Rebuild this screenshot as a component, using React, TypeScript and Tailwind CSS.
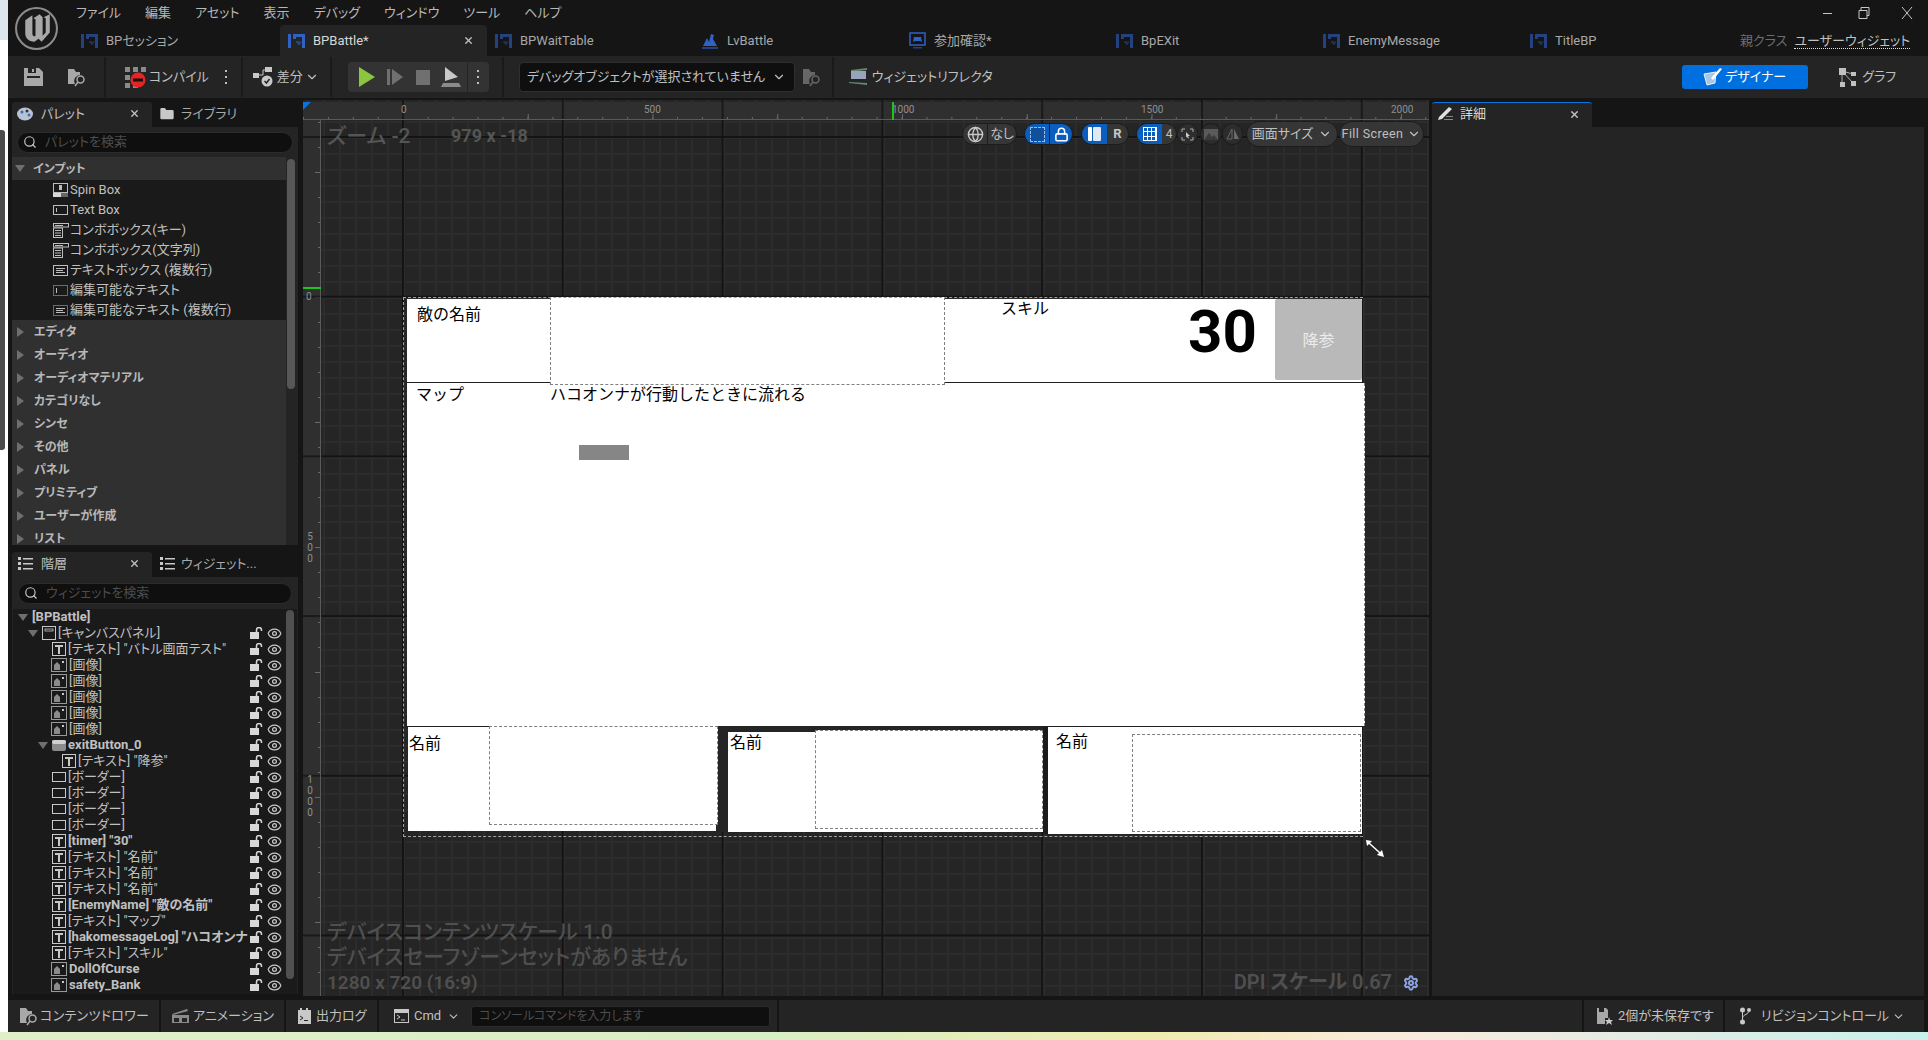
import React from 'react';
import { ChevronDown, Search, X, Folder, Lock, Eye, Globe, Settings } from 'lucide-react';

const menus = ['ファイル', '編集', 'アセット', '表示', 'デバッグ', 'ウィンドウ', 'ツール', 'ヘルプ'];

const tabs = [
  { name: 'BPセッション', kind: 'bp' },
  { name: 'BPBattle*', kind: 'bp', active: true },
  { name: 'BPWaitTable', kind: 'bp' },
  { name: 'LvBattle', kind: 'level' },
  { name: '参加確認*', kind: 'game' },
  { name: 'BpEXit', kind: 'bp' },
  { name: 'EnemyMessage', kind: 'bp' },
  { name: 'TitleBP', kind: 'bp' },
];

const paletteItems = [
  { name: 'Spin Box', icon: 'spin' },
  { name: 'Text Box', icon: 'text' },
  { name: 'コンボボックス(キー)', icon: 'combo' },
  { name: 'コンボボックス(文字列)', icon: 'combo' },
  { name: 'テキストボックス (複数行)', icon: 'multi' },
  { name: '編集可能なテキスト', icon: 'edit' },
  { name: '編集可能なテキスト (複数行)', icon: 'editmulti' },
];

const categories = ['エディタ', 'オーディオ', 'オーディオマテリアル', 'カテゴリなし', 'シンセ', 'その他', 'パネル', 'プリミティブ', 'ユーザーが作成', 'リスト'];

type TreeRow = { label: string; icon?: string; left: number; bold?: boolean; toggle?: number };

const tree: TreeRow[] = [
  { label: '[キャンバスパネル]', icon: 'canvas', left: 33, toggle: 19 },
  { label: '[テキスト] "バトル画面テスト"', icon: 't', left: 43 },
  { label: '[画像]', icon: 'img', left: 42 },
  { label: '[画像]', icon: 'img', left: 42 },
  { label: '[画像]', icon: 'img', left: 42 },
  { label: '[画像]', icon: 'img', left: 42 },
  { label: '[画像]', icon: 'img', left: 42 },
  { label: 'exitButton_0', icon: 'btn', left: 43, bold: true, toggle: 29 },
  { label: '[テキスト] "降参"', icon: 't', left: 53 },
  { label: '[ボーダー]', icon: 'border', left: 43 },
  { label: '[ボーダー]', icon: 'border', left: 43 },
  { label: '[ボーダー]', icon: 'border', left: 43 },
  { label: '[ボーダー]', icon: 'border', left: 43 },
  { label: '[timer] "30"', icon: 't', left: 43, bold: true },
  { label: '[テキスト] "名前"', icon: 't', left: 43 },
  { label: '[テキスト] "名前"', icon: 't', left: 43 },
  { label: '[テキスト] "名前"', icon: 't', left: 43 },
  { label: '[EnemyName] "敵の名前"', icon: 't', left: 43, bold: true },
  { label: '[テキスト] "マップ"', icon: 't', left: 43 },
  { label: '[hakomessageLog] "ハコオンナ', icon: 't', left: 43, bold: true },
  { label: '[テキスト] "スキル"', icon: 't', left: 43 },
  { label: 'DollOfCurse', icon: 'img', left: 42, bold: true },
  { label: 'safety_Bank', icon: 'img', left: 42, bold: true },
];

function BpIcon({ dim }: { dim?: boolean }) {
  const c = dim ? '#24427f' : '#2f62c4';
  return (
    <svg width="17" height="16" viewBox="0 0 17 16" className="shrink-0">
      <rect x="0" y="1" width="3" height="14" fill={c} />
      <rect x="5" y="1" width="12" height="3" fill={c} />
      <rect x="5" y="4" width="3" height="2" fill={c} />
      <rect x="14" y="4" width="3" height="11" fill={c} />
      <path d="M8 8 l2.5 0 l1 1 l1 -1 l1 1 l-2 3 l-1 0 l-2.500 -3z" fill={c} opacity="0.6" />
    </svg>
  );
}

function TabIcon({ kind, active }: { kind: string; active?: boolean }) {
  if (kind === 'level') {
    return (
      <svg width="17" height="18" viewBox="0 0 17 18" className="shrink-0">
        <path d="M1 14 L5 6 L7 10 L9 2 L12 3 L11 7 L15 14z" fill="#2f62c4" />
        <rect x="0" y="15" width="16" height="2" fill="#24427f" />
      </svg>
    );
  }
  if (kind === 'game') {
    return (
      <svg width="17" height="18" viewBox="0 0 17 18" fill="none" className="shrink-0">
        <rect x="1" y="1" width="15" height="12" stroke="#2f62c4" strokeWidth="1.5" />
        <path d="M4 10 L5 5 H12 L13 10 L11 9 H6z" fill="#2f62c4" />
        <rect x="4" y="15" width="9" height="1.500" fill="#24427f" />
      </svg>
    );
  }
  return <BpIcon dim={!active} />;
}

function UnrealLogo() {
  return (
    <svg width="45" height="45" viewBox="0 0 44 44" className="shrink-0">
      <circle cx="22" cy="22" r="20" fill="#191919" stroke="#8c8c8c" strokeWidth="2" />
      <path
        d="M11 14 L18 9 V27 C18 30 20 30 21 29 V13 L19 12 L25 8 L28 11 V29 L31 26 V12 L29 11 L35 8 V26 L27 35 L24 32 L20 35 C14 35 11 31 11 27z"
        fill="#a8a8a8"
      />
    </svg>
  );
}

function Kebab() {
  return (
    <svg width="4" height="16" viewBox="0 0 4 16" fill="#bdbdbd" className="shrink-0">
      <rect x="1" y="1" width="2" height="2" />
      <rect x="1" y="7" width="2" height="2" />
      <rect x="1" y="13" width="2" height="2" />
    </svg>
  );
}

function Divider() {
  return <div className="w-[2px] h-[40px] bg-[#1a1a1a] shrink-0" />;
}

function BrowseIcon({ color = '#a8a8a8' }: { color?: string }) {
  return (
    <svg width="20" height="20" viewBox="0 0 20 20" fill="none" className="shrink-0">
      <path d="M1 2 H7 L9 5 H13 V8 A6 6 0 0 0 8 17 H1z" fill={color} />
      <circle cx="13.500" cy="12.500" r="3.500" stroke={color} strokeWidth="1.500" />
      <path d="M11 15 L8 19" stroke={color} strokeWidth="1.500" />
    </svg>
  );
}

function ListIcon() {
  return (
    <svg width="15" height="13" viewBox="0 0 15 13" className="shrink-0" fill="#c8c8c8">
      <rect x="0" y="0" width="3" height="3" />
      <rect x="5" y="1" width="10" height="1.500" />
      <rect x="0" y="5" width="3" height="3" />
      <rect x="5" y="6" width="10" height="1.500" />
      <rect x="0" y="10" width="3" height="3" />
      <rect x="5" y="11" width="10" height="1.500" />
    </svg>
  );
}

function OpenLock() {
  return (
    <svg width="13" height="12" viewBox="0 0 13 12" fill="none" className="shrink-0 ml-[1px]">
      <rect x="0" y="5" width="9" height="7" fill="#d8d8d8" />
      <path d="M6.500 5 V3 A2.500 2.500 0 0 1 11.500 3 V4" stroke="#d8d8d8" strokeWidth="1.500" />
    </svg>
  );
}

function SmallWidgetIcon({ kind }: { kind: string }) {
  const s = '#bdbdbd';
  if (kind === 'spin') {
    return (
      <svg width="15" height="15" viewBox="0 0 15 15" fill="none">
        <rect x="0.500" y="0.500" width="14" height="9" stroke={s} />
        <rect x="0" y="10" width="8" height="4" fill="#d8d8d8" />
        <rect x="8" y="10" width="7" height="4" fill="#666" />
        <rect x="6" y="2" width="3" height="5" fill={s} />
      </svg>
    );
  }
  if (kind === 'text') {
    return (
      <svg width="15" height="10" viewBox="0 0 15 10" fill="none">
        <rect x="0.500" y="0.500" width="14" height="9" stroke={s} />
        <rect x="3" y="3" width="1" height="4" fill={s} />
      </svg>
    );
  }
  if (kind === 'combo') {
    return (
      <svg width="16" height="15" viewBox="0 0 16 15" fill="none">
        <rect x="0.500" y="0.500" width="15" height="3.500" stroke={s} />
        <rect x="2" y="2" width="8" height="1" fill={s} />
        <rect x="0.500" y="5" width="9" height="9.500" stroke={s} />
        <rect x="2" y="7" width="6" height="1" fill={s} />
        <rect x="2" y="9.500" width="6" height="1" fill={s} />
        <rect x="2" y="12" width="6" height="1" fill={s} />
      </svg>
    );
  }
  if (kind === 'multi') {
    return (
      <svg width="15" height="11" viewBox="0 0 15 11" fill="none">
        <rect x="0.500" y="0.500" width="14" height="10" stroke={s} />
        <rect x="3" y="3" width="9" height="1" fill={s} />
        <rect x="3" y="5" width="7" height="1" fill={s} />
        <rect x="3" y="7" width="9" height="1" fill={s} />
      </svg>
    );
  }
  return (
    <svg width="15" height="11" viewBox="0 0 15 11" fill="none">
      <rect x="0.500" y="0.500" width="14" height="10" stroke={s} strokeDasharray="1 1" />
      {kind === 'edit' ? (
        <rect x="3" y="3" width="1" height="5" fill={s} />
      ) : (
        <>
          <rect x="3" y="3" width="9" height="1" fill={s} />
          <rect x="3" y="5" width="7" height="1" fill={s} />
          <rect x="3" y="7" width="9" height="1" fill={s} />
        </>
      )}
    </svg>
  );
}

function TreeIcon({ kind }: { kind?: string }) {
  const s = '#c8c8c8';
  if (kind === 't') {
    return (
      <div className="w-[14px] h-[14px] border border-[#c8c8c8] flex items-center justify-center shrink-0">
        <svg width="8" height="9" viewBox="0 0 8 9"><path d="M0 0 H8 V2 H5 V9 H3 V2 H0z" fill={s} /></svg>
      </div>
    );
  }
  if (kind === 'img') {
    return (
      <svg width="16" height="14" viewBox="0 0 16 14" fill="none" className="shrink-0">
        <rect x="0.500" y="0.500" width="15" height="13" stroke="#999" />
        <path d="M3 12 V7 L6 4 L9 7 V12z" fill="#8a8a8a" />
        <rect x="11" y="3" width="2" height="2" fill={s} />
      </svg>
    );
  }
  if (kind === 'border') {
    return <div className="w-[14px] h-[10px] border border-[#c8c8c8] shrink-0" />;
  }
  if (kind === 'canvas') {
    return (
      <svg width="14" height="14" viewBox="0 0 14 14" fill="none" className="shrink-0">
        <rect x="0.500" y="0.500" width="13" height="13" stroke={s} />
        <rect x="3" y="3" width="8" height="2" stroke={s} strokeWidth="0.800" />
      </svg>
    );
  }
  return (
    <svg width="14" height="11" viewBox="0 0 14 11" className="shrink-0">
      <rect x="0" y="0" width="14" height="11" rx="2" fill="#8c8c8c" />
      <rect x="0" y="0" width="14" height="4" rx="2" fill="#d0d0d0" />
    </svg>
  );
}

function PanelTabs({ first, second, firstIcon, secondIcon }: { first: string; second: string; firstIcon: React.ReactNode; secondIcon: React.ReactNode }) {
  return (
    <div className="flex h-[25px] shrink-0">
      <div className="w-[140px] bg-[#242424] rounded-t-[3px] flex items-center pl-[5px] pr-[12px] pb-[2px] text-[13px] text-[#c0c0c0]">
        <span className="w-[16px] flex justify-center">{firstIcon}</span>
        <span className="ml-[8px] flex-1">{first}</span>
        <X size={11} strokeWidth={3} className="text-[#c0c0c0]" />
      </div>
      <div className="flex items-center pl-[7px] pb-[2px] text-[13px] text-[#a8a8a8]">
        <span className="w-[16px] flex justify-center">{secondIcon}</span>
        <span className="ml-[6px]">{second}</span>
      </div>
    </div>
  );
}

function SearchBox({ text }: { text: string }) {
  return (
    <div className="h-[21px] bg-[#0f0f0f] border border-[#2c2c2c] rounded-full flex items-center pl-[5px] pb-[1px] gap-[8px] text-[13px] text-[#4d4d4d]">
      <Search size={14} strokeWidth={2} className="text-[#c8c8c8]" />
      <span>{text}</span>
    </div>
  );
}

function Arrow({ open }: { open?: boolean }) {
  return open ? (
    <svg width="10" height="7" viewBox="0 0 10 7" className="shrink-0"><path d="M0 0 H10 L5 7z" fill="#6f6f6f" /></svg>
  ) : (
    <svg width="7" height="10" viewBox="0 0 7 10" className="shrink-0"><path d="M0 0 V10 L7 5z" fill="#6f6f6f" /></svg>
  );
}

function Palette() {
  return (
    <div className="h-[443px] flex flex-col">
      <PanelTabs
        first="パレット"
        second="ライブラリ"
        firstIcon={<svg width="16" height="14" viewBox="0 0 16 14"><ellipse cx="8" cy="7" rx="8" ry="6.500" fill="#b8c4d4" /><circle cx="5" cy="5" r="1.500" fill="#3c6cc0" /><circle cx="10" cy="4" r="1.500" fill="#333" /><circle cx="12" cy="8" r="1.500" fill="#3c6cc0" /></svg>}
        secondIcon={<Folder size={16} fill="#c8c8c8" strokeWidth={0} />}
      />
      <div className="flex-1 bg-[#242424] pt-[5px] min-h-0 flex flex-col overflow-hidden">
        <div className="px-[5px]"><SearchBox text="パレットを検索" /></div>
        <div className="flex-1 mt-[4px] flex min-h-0">
          <div className="w-[274px] bg-[#1a1a1a] overflow-hidden">
            <div className="h-[23px] bg-[#303030] flex items-center pl-[3px] gap-[7px] text-[12px] font-bold text-[#b8b8b8]">
              <Arrow open />
              <span className="ml-[1px]">インプット</span>
            </div>
            {paletteItems.map((item) => (
              <div key={item.name} className="h-[20px] flex items-center text-[13px] text-[#c0c0c0]">
                <div className="ml-[41px] w-[17px] flex items-center shrink-0"><SmallWidgetIcon kind={item.icon} /></div>
                <span className="ml-[0px] whitespace-nowrap">{item.name}</span>
              </div>
            ))}
            {categories.map((c) => (
              <div key={c} className="h-[23px] bg-[#303030] flex items-center pl-[5px] gap-[9px] text-[12px] font-bold text-[#b8b8b8]">
                <Arrow />
                <span className="ml-[1px]">{c}</span>
              </div>
            ))}
          </div>
          <div className="w-[12px] pl-[1px] pt-[2px]">
            <div className="w-[8px] h-[230px] rounded-full bg-[#575757]" />
          </div>
        </div>
      </div>
    </div>
  );
}

function Hierarchy() {
  return (
    <div className="h-[442px] mt-[7px] flex flex-col">
      <PanelTabs first="階層" second="ウィジェット..." firstIcon={<ListIcon />} secondIcon={<ListIcon />} />
      <div className="flex-1 bg-[#242424] pt-[6px] min-h-0 flex flex-col overflow-hidden">
        <div className="px-[6px]"><SearchBox text="ウィジェットを検索" /></div>
        <div className="flex-1 mt-[5px] mx-[1px] flex min-h-0 bg-[#1a1a1a]">
          <div className="w-[273px] overflow-hidden">
            <div className="h-[16px] flex items-center pl-[5px] text-[13px] font-bold text-[#c0c0c0]">
              <Arrow open />
              <span className="ml-[4px]">[BPBattle]</span>
            </div>
            {tree.map((row, i) => (
              <div key={i} className="relative h-[16px] flex items-center text-[13px] text-[#c0c0c0]">
                {row.toggle && (
                  <div className="absolute top-[5px]" style={{ left: row.toggle - 4 }}><Arrow open /></div>
                )}
                <div className="flex items-center gap-[2px] w-[236px] shrink-0 whitespace-nowrap" style={{ paddingLeft: row.left - 4 }}>
                  <TreeIcon kind={row.icon} />
                  <span className={row.bold ? 'font-bold' : ''}>{row.label}</span>
                </div>
                <OpenLock />
                <Eye size={15} strokeWidth={2} className="text-[#c8c8c8] ml-[4px]" />
              </div>
            ))}
          </div>
          <div className="w-[12px] pl-[1px] pt-[1px]">
            <div className="w-[8px] h-[369px] rounded-full bg-[#505050]" />
          </div>
        </div>
      </div>
    </div>
  );
}

function ToolPill({ children, className }: { children: React.ReactNode; className?: string }) {
  return <div className={'flex h-[22px] rounded-full overflow-hidden border border-[#1c1c1c] shrink-0 ' + (className ?? '')}>{children}</div>;
}

function ViewportToolbar() {
  return (
    <div className="absolute top-[21px] right-[5px] flex items-center text-[#c0c0c0] text-[13px]">
      <ToolPill className="w-[55px] bg-[#363636]">
        <div className="w-[25px] flex items-center justify-center border-r border-[#1c1c1c]"><Globe size={17} className="text-[#c8c8c8]" /></div>
        <div className="flex-1 flex items-center justify-center">なし</div>
      </ToolPill>
      <ToolPill className="w-[49px] ml-[7px] bg-[#0a5ebd]">
        <div className="w-[25px] flex items-center justify-center border-r border-[#1c1c1c]"><div className="w-[15px] h-[15px] border border-dashed border-[#a0b8d8] bg-[#0f4f9c]" /></div>
        <div className="flex-1 flex items-center justify-center"><Lock size={15} strokeWidth={2.500} className="text-white" /></div>
      </ToolPill>
      <ToolPill className="w-[48px] ml-[8px] bg-[#363636]">
        <div className="w-[25px] bg-[#0a5ebd] flex items-center justify-center gap-[1px]">
          <div className="w-[4px] h-[14px] bg-white rounded-[1px]" />
          <div className="w-[8px] h-[14px] bg-[#dfe8f4] rounded-[1px]" />
        </div>
        <div className="flex-1 flex items-center justify-center font-bold text-[#c8c8c8]">R</div>
      </ToolPill>
      <ToolPill className="w-[41px] ml-[7px] bg-[#363636]">
        <div className="w-[25px] bg-[#0a5ebd] flex items-center justify-center">
          <div className="w-[14px] h-[14px] grid grid-cols-3 gap-[1px] bg-white p-[1px]">
            {Array.from({ length: 9 }).map((_, i) => <div key={i} className="bg-[#0a5ebd]" />)}
          </div>
        </div>
        <div className="flex-1 flex items-center justify-center text-[12px]">4</div>
      </ToolPill>
      <ToolPill className="w-[21px] bg-[#2e2e2e] items-center justify-center">
        <svg width="13" height="13" viewBox="0 0 13 13" fill="none" stroke="#aaa"><path d="M1 4 V1 H4 M9 1 H12 V4 M1 9 V12 H4 M12 9 V12 H9" /><path d="M5 4 L9 8 H7 L8 10 L7 10.500 L6 8.500 L5 9.500z" fill="#ccc" stroke="none" /></svg>
      </ToolPill>
      <ToolPill className="w-[22px] ml-[2px] bg-[#2c2c2c] items-center justify-center">
        <svg width="14" height="11" viewBox="0 0 14 11"><rect x="0" y="0" width="14" height="11" fill="#5a5a5a" /><path d="M0 11 L5 4 L8 8 L10 6 L14 11z" fill="#3a3a3a" /></svg>
      </ToolPill>
      <ToolPill className="w-[21px] bg-[#2c2c2c] items-center justify-center">
        <svg width="14" height="12" viewBox="0 0 14 12" fill="none"><path d="M6 1 V11 H1z" stroke="#6a6a6a" /><path d="M8 1 V11 H13z" fill="#6a6a6a" /></svg>
      </ToolPill>
      <ToolPill className="h-[26px] w-[92px] ml-[3px] bg-[#363636] items-center justify-center gap-[5px]">
        <span>画面サイズ</span>
        <ChevronDown size={14} />
      </ToolPill>
      <ToolPill className="h-[26px] w-[85px] ml-[1px] bg-[#363636] items-center justify-center gap-[4px]">
        <span className="text-[12.500px] tracking-[0.4px]">Fill Screen</span>
        <ChevronDown size={14} />
      </ToolPill>
    </div>
  );
}

function Rulers() {
  return (
    <>
      <div className="absolute left-0 top-[2px] right-0 h-[18px] bg-[#2f2f2f] border-b border-[#5a5a5a]">
        <div className="absolute inset-x-0 bottom-0 h-[2px] bg-[linear-gradient(to_right,#6a6a6a_1px,transparent_1px)] bg-[size:24.950px_2px]" />
        <div className="absolute inset-x-0 bottom-0 h-[5px] bg-[linear-gradient(to_right,#6a6a6a_1px,transparent_1px)] bg-[size:124.750px_5px] bg-[position:100px_0] bg-repeat-x" />
        <div className="absolute inset-0 bg-[linear-gradient(to_right,#1a1a1a_2px,transparent_2px)] bg-[size:159.800px_18px] bg-[position:99px_0]" />
      </div>
      <div className="absolute left-[98px] top-[2px] text-[10px] text-[#909090]">0</div>
      <div className="absolute left-[341px] top-[2px] text-[10px] text-[#909090]">500</div>
      <div className="absolute left-[589px] top-[2px] text-[10px] text-[#909090]">1000</div>
      <div className="absolute left-[838px] top-[2px] text-[10px] text-[#909090]">1500</div>
      <div className="absolute left-[1088px] top-[2px] text-[10px] text-[#909090]">2000</div>
      <div className="absolute left-[589px] top-[2px] w-[2px] h-[18px] bg-[#1fc41f]" />

      <div className="absolute left-0 top-[20px] bottom-0 w-[18px] bg-[#2f2f2f] border-r border-[#5a5a5a]">
        <div className="absolute inset-y-0 right-0 w-[2px] bg-[linear-gradient(to_bottom,#6a6a6a_1px,transparent_1px)] bg-[size:2px_25px] bg-[position:0_2px]" />
        <div className="absolute inset-y-0 right-0 w-[5px] bg-[linear-gradient(to_bottom,#6a6a6a_1px,transparent_1px)] bg-[size:5px_125px] bg-[position:0_52px] bg-repeat-y" />
        <div className="absolute inset-0 bg-[linear-gradient(to_bottom,#1a1a1a_2px,transparent_2px)] bg-[size:18px_159.700px] bg-[position:0_16px]" />
      </div>
      <div className="absolute left-[3px] top-[191px] text-[10px] leading-[11px] text-[#909090]">0</div>
      <div className="absolute left-[3px] top-[431px] w-[8px] text-[10px] leading-[11px] text-[#909090] text-center">5<br />0<br />0</div>
      <div className="absolute left-[3px] top-[674px] w-[8px] text-[10px] leading-[11px] text-[#909090] text-center">1<br />0<br />0<br />0</div>
      <div className="absolute left-0 top-[187px] w-[18px] h-[2px] bg-[#1fc41f]" />
      <div className="absolute left-0 top-[2px] w-0 h-0 border-t-[8px] border-r-[8px] border-t-[#0b73e0] border-r-transparent" />
    </>
  );
}

// widget preview, positions are relative to the dashed canvas outline
function DesignCanvas() {
  const dashed = 'absolute border border-dashed border-[#808080]';
  return (
    <div className="absolute left-[100px] top-[197px] w-[962px] h-[540px] font-['Noto_Sans_CJK_JP',sans-serif] [font-feature-settings:normal] text-[16px] leading-[20px] text-black">
      <div className="absolute left-[4px] top-[2px] w-[955px] h-[84px] bg-white border-b border-[#222]" />
      <div className={dashed + ' left-[147px] top-0 w-[395px] h-[88px] bg-white'} />
      <div className="absolute left-[14px] top-[6px]">敵の名前</div>
      <div className="absolute left-[598px] top-0">スキル</div>
      <div className="absolute left-[785px] top-[5px] text-[60px] leading-[60px] font-bold font-['Roboto',sans-serif]">30</div>
      <div className="absolute left-[872px] top-[2px] w-[87px] h-[81px] pb-[2px] bg-[#b9b9b9] rounded-[2px] flex items-center justify-center text-[#ececec]">降参</div>

      <div className="absolute left-[4px] top-[86px] w-[958px] h-[343px] bg-white border-r border-dashed border-[#808080]" />
      <div className={dashed + ' left-[147px] top-0 w-[395px] h-[88px] border-t-0 bg-white'} />
      <div className="absolute left-[13px] top-[86px]">マップ</div>
      <div className="absolute left-[147px] top-[86px] whitespace-nowrap">ハコオンナが行動したときに流れる</div>
      <div className="absolute left-[176px] top-[148px] w-[50px] h-[15px] bg-[#868686]" />

      <div className="absolute left-[4px] top-[429px] w-[958px] h-px bg-[#222]" />
      <div className="absolute left-[5px] top-[430px] w-[308px] h-[104px] bg-white" />
      <div className={dashed + ' left-[86px] top-[429px] w-[229px] h-[99px] bg-white'} />
      <div className="absolute left-[6px] top-[435px]">名前</div>

      <div className="absolute left-[315px] top-[429px] w-[10px] h-[106px] bg-[#252525]" />
      <div className="absolute left-[325px] top-[429px] w-[315px] h-[6px] bg-[#252525]" />
      <div className="absolute left-[325px] top-[435px] w-[315px] h-[100px] bg-white" />
      <div className={dashed + ' left-[412px] top-[433px] w-[228px] h-[99px] bg-white'} />
      <div className="absolute left-[327px] top-[434px]">名前</div>

      <div className="absolute left-[640px] top-[430px] w-[5px] h-[107px] bg-[#1c1c1c]" />
      <div className="absolute left-[645px] top-[430px] w-[314px] h-[107px] bg-white" />
      <div className={dashed + ' left-[729px] top-[437px] w-[229px] h-[98px] bg-white'} />
      <div className="absolute left-[653px] top-[433px]">名前</div>

      <div className="absolute left-0 top-0 w-[960px] h-[540px] border-t border-l border-b border-dashed border-[#a0a0a0]" />
      <svg width="18" height="17" viewBox="0 0 18 17" className="absolute left-[963px] top-[543px]">
        <path d="M0 0 L6 1 L4 3 L14 12 L16 10 L18 17 L11 15 L13 13 L3 4 L1 6z" fill="#fff" />
      </svg>
    </div>
  );
}

function Viewport() {
  return (
    <div className="relative w-[1126px] h-[896px] mt-[2px] overflow-hidden bg-[#252525] bg-[image:linear-gradient(to_right,#141414_2px,transparent_2px),linear-gradient(to_bottom,#141414_2px,transparent_2px),linear-gradient(to_right,#2c2c2c_2px,transparent_2px),linear-gradient(to_bottom,#2c2c2c_2px,transparent_2px)] bg-[size:159.800px_159.700px,159.800px_159.700px,16px_16px,16px_16px] bg-[position:99px_0,0_36px,4px_0,0_5px]">
      <DesignCanvas />
      <Rulers />
      <ViewportToolbar />
      <div className="absolute left-[24px] top-[22px] text-[21px] leading-[28px] font-medium text-[#555]">ズーム -2</div>
      <div className="absolute left-[148px] top-[22px] text-[18px] leading-[28px] font-bold text-[#555]">979 x -18</div>
      <div className="absolute left-[24px] top-[820px] text-[21px] leading-[25px] font-medium text-[#4f4f4f] whitespace-nowrap">
        <div>デバイスコンテンツスケール 1.0</div>
        <div>デバイスセーフゾーンセットがありません</div>
        <div className="text-[19px] font-semibold">1280 x 720 (16:9)</div>
      </div>
      <div className="absolute right-[37px] top-[870px] text-[20px] leading-[25px] font-semibold text-[#4f4f4f] whitespace-nowrap">DPI スケール 0.67</div>
      <Settings size={16} strokeWidth={3} className="absolute left-[1100px] top-[875px] text-[#8aa4e4]" />
    </div>
  );
}

function Toolbar() {
  return (
    <div className="h-[42px] bg-[#242424] flex items-center shrink-0 text-[13px] text-[#c0c0c0]">
      <div className="w-[16px]" />
      <svg width="19" height="18" viewBox="0 0 19 18" className="shrink-0">
        <path d="M0 0 H15 L19 4 V18 H0z" fill="#a8a8a8" />
        <rect x="4" y="0" width="8" height="5" fill="#242424" />
        <rect x="8" y="1" width="2" height="3" fill="#a8a8a8" />
        <rect x="3" y="8" width="13" height="2" fill="#242424" />
      </svg>
      <div className="w-[24px]" />
      <BrowseIcon />
      <div className="w-[17px]" />
      <Divider />
      <div className="w-[19px]" />
      <svg width="21" height="24" viewBox="0 0 21 24" className="shrink-0">
        <path d="M0 2 H5 V7 H0z M8 2 H13 V7 H8z M16 2 H21 V7 H16z M0 10 H5 V15 H0z M0 18 H5 V23 H0z M8 18 H13 V23 H8z" fill="#8a8a8a" />
        <circle cx="13" cy="15" r="7.500" fill="#e62424" />
        <rect x="8" y="13.500" width="10" height="3" fill="#111" />
      </svg>
      <span className="ml-[3px]">コンパイル</span>
      <div className="w-[15px]" />
      <Kebab />
      <div className="w-[13px]" />
      <Divider />
      <div className="w-[10px]" />
      <svg width="20" height="20" viewBox="0 0 20 20" className="shrink-0">
        <rect x="0" y="6" width="6" height="5" fill="#c8c8c8" />
        <rect x="12" y="0" width="7" height="5" fill="#c8c8c8" />
        <path d="M6 8 H10 V3 H12" stroke="#c8c8c8" fill="none" />
        <circle cx="14" cy="14" r="5.500" fill="#c8c8c8" />
        <path d="M11.500 14 L13.500 16 L16.500 12" stroke="#242424" strokeWidth="1.500" fill="none" />
      </svg>
      <span className="ml-[4px]">差分</span>
      <ChevronDown size={14} className="ml-[2px]" />
      <div className="w-[11px]" />
      <Divider />
      <div className="w-[16px]" />
      <div className="h-[30px] w-[141px] bg-[#333] rounded-[4px] flex items-center shrink-0">
        <svg width="16" height="20" viewBox="0 0 16 20" className="ml-[11px] shrink-0"><path d="M0 0 L16 10 L0 20z" fill="#8cc63f" /></svg>
        <svg width="16" height="16" viewBox="0 0 16 16" className="ml-[12px] shrink-0"><rect x="0" y="0" width="3" height="16" fill="#707070" /><path d="M5 0 L16 8 L5 16z" fill="#707070" /></svg>
        <div className="ml-[13px] w-[14px] h-[15px] bg-[#707070] shrink-0" />
        <svg width="20" height="20" viewBox="0 0 20 20" className="ml-[11px] shrink-0"><path d="M4 0 L17 10 L4 14z" fill="#c8c8c8" /><path d="M2 16 H18 L20 20 H0z" fill="#8a8a8a" /></svg>
        <div className="w-[1px] h-[30px] bg-[#242424] ml-[6px]" />
        <div className="flex-1 flex justify-center"><Kebab /></div>
      </div>
      <div className="w-[13px]" />
      <Divider />
      <div className="w-[15px]" />
      <div className="h-[30px] w-[276px] bg-[#0f0f0f] border border-[#2f2f2f] rounded-[4px] flex items-center pl-[7px] pr-[8px] justify-between shrink-0">
        <span className="whitespace-nowrap">デバッグオブジェクトが選択されていません</span>
        <ChevronDown size={14} />
      </div>
      <div className="w-[7px]" />
      <BrowseIcon color="#666" />
      <div className="w-[10px]" />
      <Divider />
      <div className="w-[15px]" />
      <svg width="20" height="20" viewBox="0 0 20 20" className="shrink-0">
        <path d="M2 3 L18 1 V3 L2 5z M0 16 L18 18 V16 L0 15z" fill="#5e8a6a" />
        <rect x="2" y="4" width="15" height="11" fill="#9aa3bd" />
        <rect x="2" y="12" width="15" height="3" fill="#202430" />
      </svg>
      <span className="ml-[3px] whitespace-nowrap">ウィジェットリフレクタ</span>
      <div className="flex-1" />
      <div className="w-[126px] h-[24px] bg-[#0070e0] rounded-[3px] flex items-center pl-[21px] text-white shrink-0">
        <svg width="20" height="20" viewBox="0 0 20 20" className="shrink-0"><path d="M1 7 L13 5 L12 16 L4 18z" fill="#a9c6e6" stroke="#eaf2fb" /><path d="M8 11 L17 1 L19 2 L10 13z" fill="#fff" /></svg>
        <span className="ml-[2px]">デザイナー</span>
      </div>
      <div className="w-[31px]" />
      <svg width="17" height="19" viewBox="0 0 17 19" className="shrink-0">
        <path d="M3 3 L14 6 M3 3 V16 M3 3 L14 15" stroke="#a8a8a8" fill="none" />
        <rect x="0" y="0" width="7" height="7" fill="#c0c0c0" />
        <rect x="12" y="4" width="5" height="4" fill="#c0c0c0" />
        <rect x="1" y="14" width="5" height="5" fill="#c0c0c0" />
        <rect x="12" y="13" width="5" height="5" fill="#c0c0c0" />
      </svg>
      <span className="ml-[6px]">グラフ</span>
      <div className="w-[32px]" />
    </div>
  );
}

function BottomBar() {
  const seg = 'flex items-center h-full border-r-2 border-[#151515] shrink-0';
  return (
    <div className="h-[32px] mt-[4px] mr-[4px] bg-[#242424] flex items-center text-[13px] text-[#c0c0c0] shrink-0">
      <div className={seg + ' w-[153px] pl-[11px]'}>
        <BrowseIcon color="#a8a8a8" />
        <span className="ml-[1px] tracking-[0.3px] whitespace-nowrap">コンテンツドロワー</span>
      </div>
      <div className={seg + ' w-[125px] pl-[11px]'}>
        <svg width="17" height="14" viewBox="0 0 17 14" className="shrink-0"><path d="M0 5 L15 0 L16 2 L1 6z" fill="#8a8a8a" /><rect x="0" y="6" width="17" height="8" fill="#8a8a8a" /><rect x="2" y="9" width="5" height="4" fill="#242424" /><rect x="10" y="9" width="5" height="4" fill="#242424" /></svg>
        <span className="ml-[4px] whitespace-nowrap">アニメーション</span>
      </div>
      <div className={seg + ' w-[93px] pl-[12px]'}>
        <svg width="13" height="16" viewBox="0 0 13 16" className="shrink-0"><rect x="0" y="2" width="13" height="14" fill="#c8c8c8" /><path d="M2 8 L5 10 L2 12" stroke="#242424" fill="none" /><rect x="6" y="12" width="4" height="1" fill="#242424" /><rect x="2" y="0" width="2" height="4" fill="#c8c8c8" /><rect x="8" y="0" width="2" height="4" fill="#c8c8c8" /></svg>
        <span className="ml-[5px]">出力ログ</span>
      </div>
      <div className="flex items-center h-full pl-[15px] w-[400px] border-r-2 border-[#151515] shrink-0">
        <svg width="15" height="14" viewBox="0 0 15 14" fill="none" className="shrink-0"><rect x="0.500" y="0.500" width="14" height="13" stroke="#c8c8c8" /><rect x="1" y="1" width="13" height="3" fill="#c8c8c8" /><path d="M3 6 L6 8 L3 10" stroke="#c8c8c8" /><path d="M7 11 H11" stroke="#c8c8c8" /></svg>
        <span className="ml-[5px]">Cmd</span>
        <ChevronDown size={13} className="ml-[6px]" />
        <div className="ml-[11px] w-[299px] h-[21px] bg-[#0f0f0f] border border-[#2a2a2a] rounded-[3px] flex items-center pl-[7px] text-[12px] text-[#4d4d4d]">コンソールコマンドを入力します</div>
      </div>
      <div className="flex-1" />
      <div className="flex items-center h-full pl-[13px] w-[143px] border-l-2 border-r-2 border-[#151515] shrink-0">
        <svg width="16" height="17" viewBox="0 0 16 17" className="shrink-0"><path d="M0 0 H9 L11 2 V10 H8 V16 H0z" fill="#a8a8a8" /><rect x="2" y="0" width="5" height="4" fill="#242424" /><path d="M12 9 L13 12 L16 12 L14 14 L15 17 L12 15 L9 17 L10 14 L8 12 L11 12z" fill="#c8c8c8" /></svg>
        <span className="ml-[5px] whitespace-nowrap">2個が未保存です</span>
      </div>
      <div className="flex items-center h-full pl-[15px] w-[199px] shrink-0">
        <svg width="11" height="18" viewBox="0 0 11 18" className="shrink-0"><circle cx="2.500" cy="3" r="2.500" fill="#c8c8c8" /><circle cx="9" cy="3" r="2" fill="#c8c8c8" /><circle cx="2.500" cy="15" r="2.500" fill="#c8c8c8" /><path d="M2.500 3 V15 M9 3 C9 8 3 7 2.500 11" stroke="#c8c8c8" fill="none" /></svg>
        <span className="ml-[10px] whitespace-nowrap">リビジョンコントロール</span>
        <ChevronDown size={13} className="ml-[3px]" />
      </div>
    </div>
  );
}

export default function App() {
  return (
    <div className="w-[1928px] h-[1040px] flex flex-col overflow-hidden bg-white font-['Roboto','Noto_Sans_CJK_JP',sans-serif] [font-feature-settings:'palt']">
      <div className="flex h-[1032px] shrink-0">
        <div className="w-[8px] flex flex-col shrink-0">
          <div className="h-[40px] bg-[#dce6ee]" />
          <div className="h-[90px] bg-white" />
          <div className="h-[320px] w-[5px] bg-[#4a4a4a] rounded-r-[3px]" />
          <div className="flex-1 bg-white" />
        </div>
        <div className="flex-1 bg-[#151515] flex flex-col min-w-0">
          <div className="h-[56px] flex shrink-0">
            <div className="w-[65px] pl-[6px] pt-[6px] shrink-0"><UnrealLogo /></div>
            <div className="flex-1 flex flex-col min-w-0">
              <div className="h-[25px] flex items-center shrink-0 text-[13px] text-[#b8b8b8]">
                <div className="flex gap-[24px] pl-[3px]">
                  {menus.map((m) => <span key={m}>{m}</span>)}
                </div>
                <div className="flex-1" />
                <svg width="96" height="14" viewBox="0 0 96 14" fill="none" stroke="#c8c8c8" className="mr-[14px] shrink-0">
                  <path d="M5 7.500 H14 M41 4.500 H49 V12.500 H41z M43 4 V1.500 H51 V9.500 H49 M84 1 L94 13 M94 1 L84 13" />
                </svg>
              </div>
              <div className="flex h-[31px] shrink-0 items-center">
                {tabs.map((t) => (
                  <div key={t.name} className={'w-[207px] h-full flex items-center pl-[8px] shrink-0 text-[13px] ' + (t.active ? 'bg-[#242424] rounded-t-[4px] text-[#d8d8d8] pr-[13px]' : 'text-[#a8a8a8]')}>
                    <TabIcon kind={t.kind} active={t.active} />
                    <span className="ml-[8px] flex-1 whitespace-nowrap">{t.name}</span>
                    {t.active && <X size={11} strokeWidth={3} className="text-[#c0c0c0]" />}
                  </div>
                ))}
                <div className="ml-[11px] text-[13px] text-[#6e6e6e] whitespace-nowrap">親クラス</div>
                <div className="ml-[7px] text-[13px] text-[#c0c0c0] border-b border-dotted border-[#e0e0e0] leading-[15px] whitespace-nowrap">ユーザーウィジェット</div>
              </div>
            </div>
          </div>
          <Toolbar />
          <div className="flex h-[898px] shrink-0">
            <div className="w-[295px] pl-[4px] pr-[5px] pt-[4px] flex flex-col shrink-0">
              <Palette />
              <Hierarchy />
            </div>
            <Viewport />
            <div className="w-[3px] shrink-0" />
            <div className="w-[492px] pt-[4px] flex flex-col shrink-0">
              <div className="w-[160px] h-[25px] bg-[#242424] border-t border-[#0b73e0] rounded-t-[3px] flex items-center pl-[5px] pr-[12px] pb-[2px] text-[13px] text-[#d8d8d8] shrink-0">
                <svg width="16" height="16" viewBox="0 0 16 16" className="shrink-0"><path d="M2 11 L12 1 L15 3 L5 13 L1 14z" fill="#e0e0e0" /><rect x="9" y="10" width="7" height="1" fill="#888" /><rect x="7" y="13" width="9" height="1" fill="#888" /></svg>
                <span className="ml-[7px] flex-1">詳細</span>
                <X size={11} strokeWidth={3} className="text-[#c0c0c0]" />
              </div>
              <div className="flex-1 bg-[#242424]" />
            </div>
          </div>
          <BottomBar />
        </div>
      </div>
      <div className="flex-1 bg-[linear-gradient(to_right,#dff0c8_0%,#d8eec4_40%,#f0ecb0_60%,#fbeadc_72%,#c8f0ec_100%)]" />
    </div>
  );
}
